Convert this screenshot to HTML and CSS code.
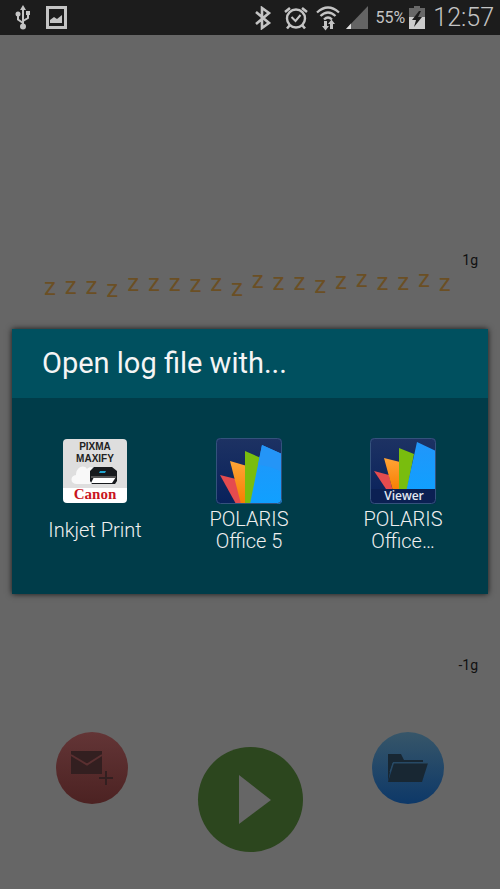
FILE: index.html
```html
<!DOCTYPE html>
<html lang="en">

<head>
    <meta charset="UTF-8">
    <meta name="viewport" content="width=device-width, initial-scale=1.0">
    <title>Open log file with...</title>
    <link rel="stylesheet" href="styles.css">
</head>

<body>
    <header class="status-bar">
        <svg class="icon-usb" width="16" height="25" viewBox="0 0 16 25">
            <path d="M8 3v18M8 18l-5-3.500V9M8 16l5-3V8" fill="none" stroke="#c4c4c4" stroke-width="2" />
            <path d="M8 0l3 5H5z" fill="#c4c4c4" />
            <circle cx="3" cy="9" r="2.500" fill="#c4c4c4" />
            <circle cx="8" cy="21.500" r="3" fill="#c4c4c4" />
            <path d="M11 6h4v4h-4z" fill="#c4c4c4" />
        </svg>
        <svg width="22" height="24" viewBox="0 0 22 24">
            <path d="M1.500 1.500h18v20h-18z" fill="none" stroke="#c4c4c4" stroke-width="3" />
            <path d="M4 17v-3l4-3 3 2 5-4v8z" fill="#c4c4c4" />
        </svg>
        <span class="spacer"></span>
        <svg width="18" height="24" viewBox="0 0 18 24">
            <path d="M2 6l13 11-7 5V2l7 5L2 18" fill="none" stroke="#c4c4c4" stroke-width="2.600" />
        </svg>
        <svg class="icon-alarm" width="24" height="24" viewBox="0 0 24 24">
            <circle cx="12" cy="12.500" r="9" fill="none" stroke="#c4c4c4" stroke-width="2.400" />
            <path d="M7.500 11l4 4 5-6" fill="none" stroke="#c4c4c4" stroke-width="2" />
            <path d="M1 6l5-4M23 6l-5-4M6 19l-3 3.500M18 19l3 3.500" stroke="#c4c4c4" stroke-width="2.600" />
        </svg>
        <svg class="icon-wifi" width="24" height="26" viewBox="0 0 24 26">
            <path d="M1 7.500Q12-2.500 23 7.500M4.500 11Q12 4 19.500 11M8 14.500Q12 10.500 16 14.500" fill="none" stroke="#c4c4c4" stroke-width="2.300" />
            <path d="M8 16h3v5h2l-3.500 4.500L6 21h2zM14 24h3v-5h2l-3.500-4.500L12 19h2z" fill="#c4c4c4" />
        </svg>
        <svg class="icon-signal" width="22" height="23" viewBox="0 0 22 23">
            <path d="M22 0v23H0z" fill="#646464" />
            <path d="M5 17.500V23H0z" fill="#ddd" />
        </svg>
        <span class="battery-level">55%</span>
        <svg class="icon-battery" width="16" height="23" viewBox="0 0 16 23">
            <path d="M5 0h6v2h5v21H0V2h5z" fill="#686868" />
            <path d="M0 11h16v12H0z" fill="#ccc" />
            <path d="M10 5L3 14h4l-2 7 8-10H9l3-6z" fill="#1c1c1c" />
        </svg>
        <time class="clock">12:57</time>
    </header>

    <main class="recorder">
        <section class="graph">
            <span class="graph-label">1g</span>
            <div class="sleep-trace">
                <span style="margin-top: 8px">z</span>
                <span style="margin-top: 7px">z</span>
                <span style="margin-top: 7px">z</span>
                <span style="margin-top: 10px">z</span>
                <span style="margin-top: 4px">z</span>
                <span style="margin-top: 4px">z</span>
                <span style="margin-top: 4px">z</span>
                <span style="margin-top: 5px">z</span>
                <span style="margin-top: 4px">z</span>
                <span style="margin-top: 9px">z</span>
                <span style="margin-top: 1px">z</span>
                <span style="margin-top: 3px">z</span>
                <span style="margin-top: 3px">z</span>
                <span style="margin-top: 6px">z</span>
                <span style="margin-top: 2px">z</span>
                <span style="margin-top: 0px">z</span>
                <span style="margin-top: 3px">z</span>
                <span style="margin-top: 3px">z</span>
                <span style="margin-top: 0px">z</span>
                <span style="margin-top: 4px">z</span>
            </div>
            <span class="graph-label graph-label-bottom">-1g</span>
        </section>
        <nav class="actions">
            <button class="round mail" aria-label="Send log">
                <svg width="72" height="72" viewBox="0 0 72 72">
                    <path d="M15 19h31v23H15z" fill="#331f20" />
                    <path d="M15 23l16 9.500L46 23" fill="none" stroke="#5a2f30" stroke-width="2" />
                    <path d="M43 46h14M50 39v14" stroke="#331f20" stroke-width="2" />
                </svg>
            </button>
            <button class="round play" aria-label="Start">
                <svg width="105" height="105" viewBox="0 0 105 105">
                    <path d="M41 28l32 25-32 24z" fill="#666" />
                </svg>
            </button>
            <button class="round open" aria-label="Open log">
                <svg width="72" height="72" viewBox="0 0 72 72">
                    <path d="M16 22h13l3 6h19v2H16z" fill="#182733" />
                    <path d="M16 28h5v2l-3 10-2 10z" fill="#182733" />
                    <path d="M22 31h34l-6 19H16z" fill="#182733" />
                    <path d="M18 40l3-9h35" fill="none" stroke="#294b65" stroke-width="1" />
                </svg>
            </button>
        </nav>
    </main>

    <div class="overlay">
        <section class="dialog" role="dialog" aria-labelledby="dialogTitle">
            <h1 id="dialogTitle">Open log file with...</h1>
            <div class="apps">
                <button class="app">
                    <svg width="66" height="66" viewBox="0 0 66 66">
                        <defs>
                            <clipPath id="canonClip"><rect x="1" y="1" width="64" height="64" rx="4" /></clipPath>
                        </defs>
                        <g clip-path="url(#canonClip)">
                            <path d="M1 1h64v50H1z" fill="#dedede" />
                            <path d="M1 50h64v15H1z" fill="#fff" />
                        </g>
                        <text class="pixma" x="33" y="12">PIXMA</text>
                        <text class="pixma" x="33" y="24">MAXIFY</text>
                        <path d="M14 46c-6 0-6-9 0-9 0-8 8-11 11-6 3-4 9-1 9 4v11z" fill="#f8f8f8" />
                        <path d="M32 29h18l5 4v10l-2 3H30l-2-3V33z" fill="#171a1d" />
                        <path d="M32 39h22l-4 6H29z" fill="#fff" />
                        <path d="M29 38h25v2H29z" fill="#555" />
                        <path d="M38 33h6l-1 2h-6z" fill="#22a6cf" />
                        <text class="canon" x="33" y="61">Canon</text>
                    </svg>
                    <span class="app-name">Inkjet Print</span>
                </button>
                <button class="app">
                    <svg width="66" height="66" viewBox="0 0 66 66">
                        <defs>
                            <linearGradient id="navy" x2="0" y2="1">
                                <stop offset="0" stop-color="#1d3263" />
                                <stop offset="1" stop-color="#08215b" />
                            </linearGradient>
                            <linearGradient id="orange" x2="0" y2="1">
                                <stop offset="0" stop-color="#ffa436" />
                                <stop offset="1" stop-color="#f77d00" />
                            </linearGradient>
                            <linearGradient id="blue" x2="0" y2="1">
                                <stop offset="0" stop-color="#2196fa" />
                                <stop offset="1" stop-color="#10a0ff" />
                            </linearGradient>
                            <clipPath id="tile"><rect width="66" height="66" rx="4" /></clipPath>
                        </defs>
                        <g clip-path="url(#tile)">
                            <path d="M0 0h66v66H0z" fill="url(#navy)" />
                            <path d="M4 37l16 4 6 25h-6z" fill="#e54b4e" />
                            <path d="M14 23l17 5v38h-6z" fill="url(#orange)" />
                            <path d="M29 13l16 7-10 46h-6z" fill="#79bd0e" />
                            <path d="M46 7l20 9v50H34z" fill="url(#blue)" />
                            <path d="M42 27q13 1 24 7V16L46 7z" fill="#2495f7" />
                        </g>
                        <rect x=".5" y=".5" width="65" height="65" rx="4" fill="none" stroke="#34527c" />
                    </svg>
                    <span class="app-name">POLARIS Office 5</span>
                </button>
                <button class="app">
                    <svg width="66" height="66" viewBox="0 0 66 66">
                        <g clip-path="url(#tile)">
                            <path d="M0 0h66v66H0z" fill="url(#navy)" />
                            <path d="M4 33l15 4 4 17h-5z" fill="#e54b4e" />
                            <path d="M14 20l16 4v29h-7z" fill="url(#orange)" />
                            <path d="M29 10l15 6-7 37h-8z" fill="#79bd0e" />
                            <path d="M47 4l19 9v41H36z" fill="url(#blue)" />
                            <path d="M0 51h66v15H0z" fill="#0b2053" />
                        </g>
                        <text class="viewer" x="34" y="62">Viewer</text>
                        <rect x=".5" y=".5" width="65" height="65" rx="4" fill="none" stroke="#34527c" />
                    </svg>
                    <span class="app-name">POLARIS Office…</span>
                </button>
            </div>
        </section>
    </div>
</body>

</html>
```
FILE: styles.css
```css
* {
    box-sizing: border-box;
}

body {
    font-family: Roboto, sans-serif;
    display: flex;
    flex-direction: column;
    min-height: 100vh;
    margin: 0;
    background-color: #666;
    color: #111;
}

button {
    font-family: inherit;
    padding: 0;
    border: none;
    background: none;
    cursor: pointer;
}

svg {
    display: block;
    flex-shrink: 0;
}

.status-bar {
    display: flex;
    align-items: center;
    height: 35px;
    padding: 0 6px 0 15px;
    background-color: #1c1c1c;
    color: #c4c4c4;
    font-weight: 300;
}

.icon-usb {
    margin-right: 15px;
}

.spacer {
    flex: 1;
}

.icon-alarm {
    margin-left: 12px;
}

.icon-wifi {
    margin-left: 8px;
}

.icon-signal {
    margin-left: 6px;
}

.battery-level {
    margin-left: 8px;
    font-size: 16px;
    font-weight: 400;
}

.icon-battery {
    margin: 0 8px 0 4px;
}

.clock {
    font-size: 25px;
}

.recorder {
    flex: 1;
    display: flex;
    flex-direction: column;
}

.graph {
    flex: 1;
    display: flex;
    flex-direction: column;
    padding: 217px 22px 59px 44px;
}

.graph-label {
    align-self: flex-end;
    font-size: 14px;
    line-height: 16px;
}

.graph-label-bottom {
    margin-top: auto;
}

.sleep-trace {
    display: flex;
    justify-content: space-between;
    align-items: flex-start;
    padding-right: 27px;
    font-size: 24px;
    line-height: 22px;
    color: #6b4f24;
}

.actions {
    display: flex;
    justify-content: space-between;
    align-items: flex-start;
    padding: 0 56px 37px;
}

.round {
    border-radius: 50%;
}

.mail {
    background: linear-gradient(#633536, #4c2222);
}

.play {
    margin-top: 15px;
    background-color: #2c461e;
}

.open {
    background: linear-gradient(#375669, #0d3868);
}

.overlay {
    position: absolute;
    inset: 35px 0 2px;
    display: flex;
    align-items: center;
    padding: 0 12px;
}

.dialog {
    flex: 1;
    background-color: #003c49;
    box-shadow: 0 0 6px rgba(0, 0, 0, 0.8);
}

.dialog h1 {
    margin: 0;
    padding: 0 30px;
    background-color: #00505f;
    color: #f5f5f5;
    font-size: 29px;
    font-weight: 400;
    line-height: 69px;
}

.apps {
    display: grid;
    grid-template-columns: repeat(3, 1fr);
    padding: 40px 8px 42px 6px;
}

.app {
    display: flex;
    flex-direction: column;
    align-items: center;
    gap: 4px;
    color: #f0f0f0;
}

.app-name {
    display: flex;
    align-items: center;
    height: 44px;
    max-width: 110px;
    font-size: 20px;
    font-weight: 300;
    line-height: 22px;
}

.pixma,
.canon,
.viewer {
    text-anchor: middle;
}

.pixma {
    font: 700 10px "Liberation Sans", sans-serif;
    fill: #222;
}

.canon {
    font: 700 15px "Liberation Serif", serif;
    fill: #c9151e;
}

.viewer {
    font: 600 12px "Open Sans", sans-serif;
    fill: #e4e9f2;
}
```
